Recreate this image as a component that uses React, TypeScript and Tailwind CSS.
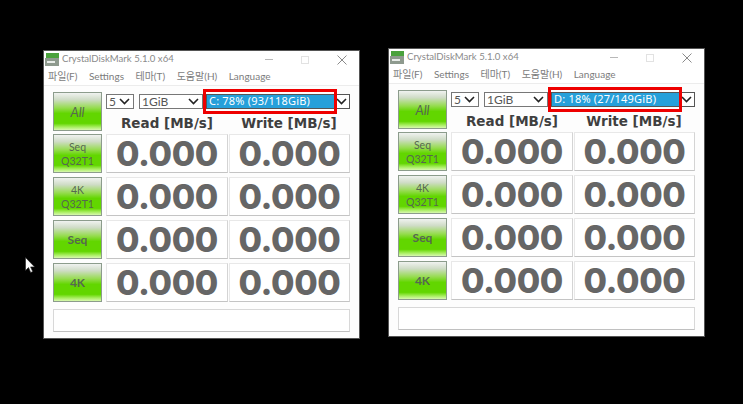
const ui = { fontFamily: 'Lato, "Noto Sans CJK KR", sans-serif' };
const comic = { fontFamily: 'Lato, "Noto Sans", sans-serif' };

function Chevron() {
  return (
    <svg width="11" height="7" viewBox="0 0 11 7" className="shrink-0">
      <path d="M1 1l4.5 4.5L10 1" fill="none" stroke="#222" strokeWidth="1.6" />
    </svg>
  );
}

function GreenButton({ lines, className }: { lines: string[]; className: string }) {
  return (
    <div
      style={comic}
      className={`w-[49px] shrink-0 border border-[#8c9c8c] bg-[linear-gradient(to_bottom,#f0f2f0_0%,#cfdcc6_18%,#96dc50_40%,#62d600_55%,#62d600_82%,#a8ee60_92%,#d8f8b0_100%)] flex flex-col items-center justify-center text-[#566850] leading-[14px] ${className}`}
    >
      {lines.map((l) => (
        <span key={l}>{l}</span>
      ))}
    </div>
  );
}

function Value({ w }: { w: string }) {
  return (
    <div
      style={{ fontFamily: 'Inter, sans-serif' }}
      className={`${w} h-full border border-[#e8e8e8] border-b-[#c4c4c4] border-r-[#d4d4d4] bg-white flex items-center justify-center text-[34px] font-extrabold text-[#666666] tracking-[-0.4px] leading-none`}
    >
      0.000
    </div>
  );
}

function Row({ lines, small }: { lines: string[]; small?: boolean }) {
  return (
    <div className="flex h-[39px] mt-[4px]">
      <GreenButton lines={lines} className={`h-full ${small ? 'text-[10.5px]' : 'text-[12px] font-bold'}`} />
      <div className="flex gap-px ml-[4px] h-full">
        <Value w="w-[122px]" />
        <Value w="w-[121px]" />
      </div>
    </div>
  );
}

function Win({ className, drive }: { className: string; drive: string }) {
  return (
    <div style={ui} className={`absolute w-[317px] h-[289px] bg-white border border-[#555] flex flex-col ${className}`}>
      <div className="h-[17px] flex items-center pl-px shrink-0 relative">
        <svg width="15" height="14" viewBox="0 0 15 14" className="shrink-0">
          <rect x="1" y="0" width="13" height="5" fill="#4aa23c" />
          <rect x="0" y="5" width="14" height="8" fill="#8e9a8e" />
          <rect x="2" y="8" width="8" height="2" fill="#e8ece8" />
        </svg>
        <span className="ml-[2px] text-[9.6px] text-[#8a8a8a] whitespace-nowrap">CrystalDiskMark 5.1.0 x64</span>
        <div className="ml-auto flex items-center mr-[12px]">
          <div className="w-[8px] h-px bg-[#b8b8b8]" />
          <div className="w-[8px] h-[8px] border border-[#e2e2e2] ml-[28px]" />
          <svg width="10" height="10" viewBox="0 0 10 10" className="ml-[28px]">
            <path d="M0.5 0.5l9 9M9.5 0.5l-9 9" stroke="#8a8a8a" strokeWidth="1" fill="none" />
          </svg>
        </div>
      </div>
      <div className="h-[16px] shrink-0 flex items-center pl-[4px] gap-[11.5px] text-[10px] text-[#7c7c7c] whitespace-nowrap border-b border-[#ececec] box-content pb-px">
        <span>파일(F)</span>
        <span>Settings</span>
        <span>테마(T)</span>
        <span>도움말(H)</span>
        <span>Language</span>
      </div>
      <div className="flex-1 bg-[#fdfdfd] pl-[9px] pt-[6px] flex flex-col">
        <div className="flex h-[39px]">
          <GreenButton lines={['All']} className="h-full text-[13px] italic" />
          <div className="ml-[4px] flex flex-col">
            <div className="flex items-center h-[15px] mt-[2px] relative text-[12px] text-[#555]">
              <div className="w-[28px] h-full border border-[#777] bg-white flex items-center justify-between pl-[2px] pr-[3px]">
                <span>5</span>
                <Chevron />
              </div>
              <div className="w-[64px] h-full border border-[#777] bg-white flex items-center justify-between pl-[2px] pr-[3px] ml-[5px]">
                <span>1GiB</span>
                <Chevron />
              </div>
              <div className="w-[144px] h-full border border-[#555] bg-white flex items-center justify-between pr-[2px] ml-[3px] relative">
                <div
                  style={{ fontFamily: '"Noto Sans", sans-serif' }}
                  className="w-[128px] h-[13px] bg-[#26a0da] text-white text-[11px] tracking-[0.2px] flex items-center pl-[2px] whitespace-nowrap"
                >
                  {drive}
                </div>
                <Chevron />
                <div className="absolute left-[-4px] top-[-6px] w-[134px] h-[25px] border-[3px] border-[#ee0000]" />
              </div>
            </div>
            <div
              style={{ fontFamily: '"DejaVu Sans", sans-serif' }}
              className="flex text-[13.5px] font-bold text-[#3f3f3f] mt-[7px] leading-[15px]"
            >
              <span className="w-[122px] text-center">Read [MB/s]</span>
              <span className="w-[122px] text-center">Write [MB/s]</span>
            </div>
          </div>
        </div>
        <div className="-mt-px">
          <Row lines={['Seq', 'Q32T1']} small />
        </div>
        <Row lines={['4K', 'Q32T1']} small />
        <Row lines={['Seq']} />
        <Row lines={['4K']} />
        <div className="w-[297px] h-[23px] mt-[7px] border border-[#d8d8d8] border-b-[#c0c0c0] bg-white" />
      </div>
    </div>
  );
}

export default function App() {
  return (
    <div className="relative w-[743px] h-[404px] bg-black overflow-hidden">
      <Win className="left-[43px] top-[50px]" drive="C: 78% (93/118GiB)" />
      <Win className="left-[388px] top-[48px]" drive="D: 18% (27/149GiB)" />
      <svg width="12" height="17" viewBox="0 0 12 17" className="absolute left-[25px] top-[257px]">
        <path d="M0.5 0.5v13l3-3 2.2 5 2-.9-2.1-4.7h4z" fill="#fff" stroke="#222" strokeWidth="0.6" />
      </svg>
    </div>
  );
}
